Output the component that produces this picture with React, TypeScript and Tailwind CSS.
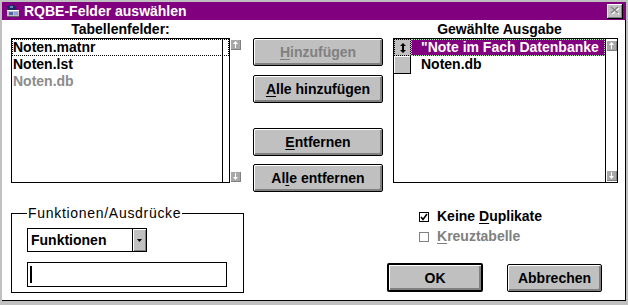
import React from 'react'

const ScrollArrow = ({ down }: { down?: boolean }) => (
  <div className='w-[10px] h-[10px] bg-[#a8a8a8] border-r border-b border-[#808080] flex items-center justify-center'>
    <svg width='7' height='7' viewBox='0 0 7 7'>
      {down ? (
        <path d='M3 0h1v4h2L3.5 7 1 4h2z' fill='#fff' />
      ) : (
        <path d='M3.5 0 6 3H4v4H3V3H1z' fill='#fff' />
      )}
    </svg>
  </div>
)

const Btn = ({
  children,
  disabled,
  className = '',
}: {
  children: React.ReactNode
  disabled?: boolean
  className?: string
}) => (
  <div
    className={
      'h-[28px] bg-[#c0c0c0] border border-black rounded-[2px] flex items-center justify-center leading-none shadow-[inset_1px_1px_0_#fff,inset_-2px_-2px_0_#808080] ' +
      (disabled ? 'text-[#808080] ' : 'text-black ') +
      className
    }
  >
    {children}
  </div>
)

const U = ({ children }: { children: React.ReactNode }) => <span className='underline underline-offset-2'>{children}</span>

const TitleIcon = () => (
  <svg width='15' height='14' viewBox='0 0 15 14' className='ml-[4px]'>
    <path d='M3 1h5l2 2v3H2V3z' fill='#1c2a5c' />
    <rect x='4' y='2' width='3' height='2' fill='#6f86c8' />
    <rect x='1' y='6' width='12' height='7' fill='#c0c0c0' />
    <rect x='1' y='6' width='12' height='1' fill='#fff' />
    <rect x='3' y='8' width='4' height='3' fill='#4a64b0' />
    <rect x='8' y='8' width='4' height='3' fill='#8ea0d8' />
    <rect x='1' y='12' width='12' height='1' fill='#606060' />
  </svg>
)

const Check = ({ checked, disabled }: { checked?: boolean; disabled?: boolean }) => (
  <div
    className={
      'w-[10px] h-[10px] mt-[6px] border bg-white flex items-center justify-center ' +
      (disabled ? 'border-[#808080]' : 'border-black')
    }
  >
    {checked && (
      <svg width='8' height='8' viewBox='0 0 8 8'>
        <path d='M1 4l2 2.5L7 1' stroke='#000' strokeWidth='1.6' fill='none' />
      </svg>
    )}
  </div>
)

export default function App() {
  return (
    <div className="w-[628px] h-[305px] bg-[#c0c0c0] px-[2px] pt-[2px] pb-[4px] flex flex-col font-['Liberation_Sans',Arial,sans-serif] text-[14px] font-bold text-black overflow-hidden">
      {/* Titelleiste */}
      <div className='h-[18px] shrink-0 bg-[#800080] flex items-center'>
        <TitleIcon />
        <span className='ml-[3px] text-white text-[14px] leading-[18px]'>RQBE-Felder auswählen</span>
        <div className='ml-auto mr-[3px] w-[16px] h-[15px] bg-[#c0c0c0] border-r border-b border-black shadow-[inset_1px_1px_0_#fff,inset_-1px_-1px_0_#808080] flex items-center justify-center'>
          <svg width='10' height='9' viewBox='0 0 10 9'>
            <path d='M2 2l7 6M9 2L2 8' stroke='#fff' strokeWidth='1.6' />
            <path d='M1 1l7 6M8 1L1 7' stroke='#808080' strokeWidth='1.6' />
          </svg>
        </div>
      </div>

      <div className='flex-1 bg-white border-r border-b border-black pl-[9px] pt-[1px]'>
        {/* obere Zeile */}
        <div className='flex items-start'>
          {/* Tabellenfelder */}
          <div className='w-[231px]'>
            <div className='w-[219px] h-[17px] leading-[17px] text-center'>Tabellenfelder:</div>
            <div className='flex'>
              <div className='relative w-[219px] h-[145px] border border-black'>
                <div className='absolute top-0 bottom-0 left-[210px] w-px bg-black' />
                <div className='h-[17px] leading-[15px] border border-dotted border-black'>Noten.matnr</div>
                <div className='h-[17px] leading-[17px] pl-[1px]'>Noten.lst</div>
                <div className='h-[17px] leading-[17px] pl-[1px] text-[#8c8c8c]'>Noten.db</div>
              </div>
              <div className='ml-[1px] w-[11px] flex flex-col justify-between pt-[2px] pb-[1px]'>
                <ScrollArrow />
                <ScrollArrow down />
              </div>
            </div>
          </div>

          {/* Schaltflächen */}
          <div className='ml-[11px] w-[130px] pt-[17px] flex flex-col'>
            <Btn disabled>
              <U>H</U>inzufügen
            </Btn>
            <Btn className='mt-[9px]'>
              <U>A</U>lle hinzufügen
            </Btn>
            <Btn className='mt-[25px]'>
              <U>E</U>ntfernen
            </Btn>
            <Btn className='mt-[8px]'>
              Al<U>l</U>e entfernen
            </Btn>
          </div>

          {/* Gewählte Ausgabe */}
          <div className='ml-[10px] w-[225px]'>
            <div className='w-[213px] h-[17px] leading-[17px] text-center'>Gewählte Ausgabe</div>
            <div className='w-[225px] h-[145px] border border-black flex'>
              <div className='w-[17px] flex flex-col'>
                <div className='h-[17px] bg-[#c0c0c0] border border-dotted border-black flex items-center justify-center'>
                  <svg width='6' height='10' viewBox='0 0 6 10'>
                    <path d='M3 0 6 3H4v4h2L3 10 0 7h2V3H0z' fill='#000' />
                  </svg>
                </div>
                <div className='h-[18px] bg-[#c0c0c0] border-r border-b border-black shadow-[inset_1px_1px_0_#fff]' />
              </div>
              <div className='flex-1 min-w-0'>
                <div className='h-[17px] leading-[15px] bg-[#800080] text-white pl-[9px] whitespace-nowrap overflow-hidden border border-dotted border-[#b8e8b8]'>
                  "Note im Fach Datenbanke
                </div>
                <div className='h-[17px] leading-[17px] pl-[10px]'>Noten.db</div>
              </div>
              <div className='w-[12px] border-l border-black flex flex-col justify-between items-center pt-[2px] pb-[1px]'>
                <ScrollArrow />
                <ScrollArrow down />
              </div>
            </div>
          </div>
        </div>

        {/* untere Zeile */}
        <div className='flex items-start mt-[13px]'>
          <fieldset className='w-[233px] border border-black pl-[15px] pt-[7px] pb-[5px]'>
            <legend className='px-[1px] leading-[16px] font-normal tracking-[0.7px]'>Funktionen/Ausdrücke</legend>
            <div className='w-[120px] h-[24px] border border-black flex'>
              <div className='flex-1 leading-[22px] pl-[3px]'>Funktionen</div>
              <div className='w-[14px] bg-[#c0c0c0] border-l border-black shadow-[inset_1px_1px_0_#fff,inset_-1px_-1px_0_#808080] flex items-center justify-center'>
                <svg width='5' height='3' viewBox='0 0 5 3'>
                  <path d='M0 0h5L2.5 3z' fill='#000' />
                </svg>
              </div>
            </div>
            <div className='w-[200px] h-[25px] mt-[10px] border border-black pl-[2px] pt-[3px]'>
              <div className='w-[2px] h-[17px] bg-black' />
            </div>
          </fieldset>

          <div className='ml-[143px] pt-[1px]'>
            <div className='pl-[32px]'>
              <div className='h-[20px] flex items-start'>
                <Check checked />
                <span className='ml-[8px] leading-[20px]'>
                  Keine <U>D</U>uplikate
                </span>
              </div>
              <div className='h-[20px] flex items-start text-[#808080]'>
                <Check disabled />
                <span className='ml-[8px] leading-[20px]'>
                  <U>K</U>reuztabelle
                </span>
              </div>
            </div>
            <div className='flex items-start mt-[17px]'>
              <Btn className='w-[96px] h-[29px] border-2'>OK</Btn>
              <Btn className='w-[95px] ml-[24px] mt-[1px]'>Abbrechen</Btn>
            </div>
          </div>
        </div>
      </div>
    </div>
  )
}
